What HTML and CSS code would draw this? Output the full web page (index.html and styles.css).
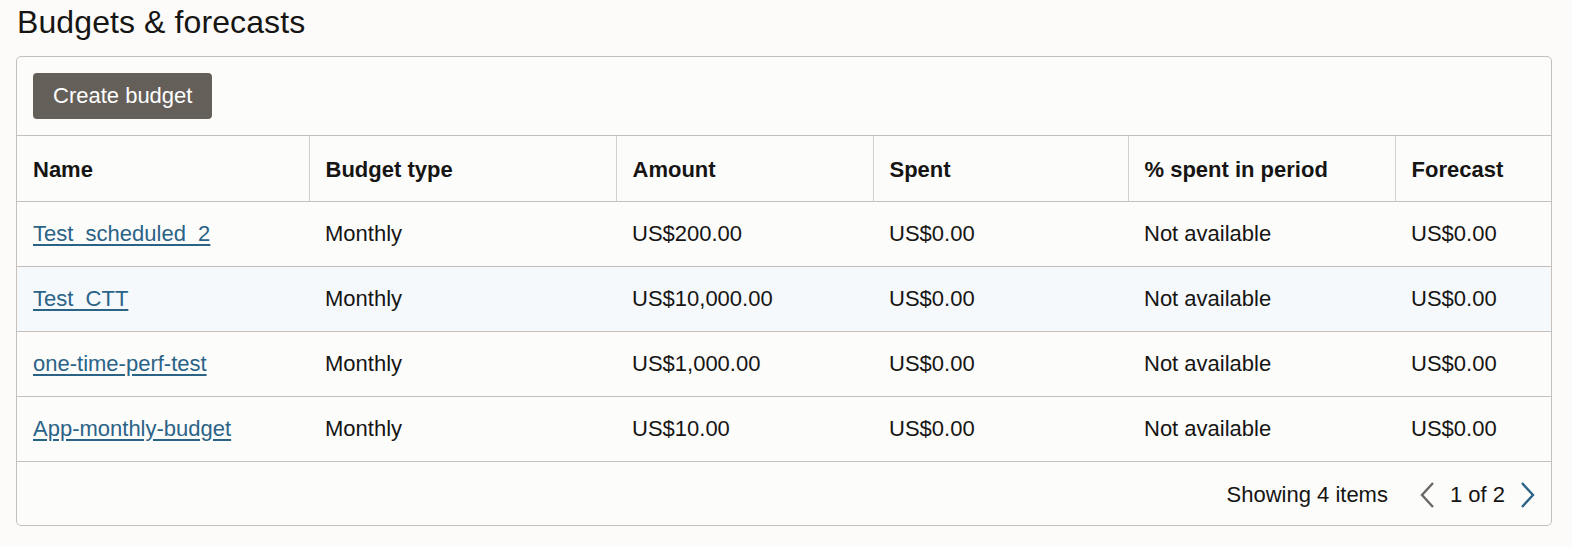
FILE: index.html
```html
<!DOCTYPE html>
<html lang="en">
<head>
  <meta charset="UTF-8">
  <meta name="viewport" content="width=device-width, initial-scale=1.0">
  <title>Budgets &amp; forecasts</title>
  <link rel="stylesheet" href="styles.css">
</head>
<body>
  <h1 class="page-title">Budgets &amp; forecasts</h1>

  <div class="panel">
    <div class="toolbar">
      <button class="btn">Create budget</button>
    </div>

    <table class="budgets">
      <colgroup>
        <col class="c-name">
        <col class="c-type">
        <col class="c-amount">
        <col class="c-spent">
        <col class="c-pct">
        <col class="c-forecast">
      </colgroup>
      <thead>
        <tr>
          <th>Name</th>
          <th>Budget type</th>
          <th>Amount</th>
          <th>Spent</th>
          <th>% spent in period</th>
          <th>Forecast</th>
        </tr>
      </thead>
      <tbody>
        <tr>
          <td><a href="#">Test_scheduled_2</a></td>
          <td>Monthly</td>
          <td>US$200.00</td>
          <td>US$0.00</td>
          <td>Not available</td>
          <td>US$0.00</td>
        </tr>
        <tr class="hover">
          <td><a href="#">Test_CTT</a></td>
          <td>Monthly</td>
          <td>US$10,000.00</td>
          <td>US$0.00</td>
          <td>Not available</td>
          <td>US$0.00</td>
        </tr>
        <tr>
          <td><a href="#">one-time-perf-test</a></td>
          <td>Monthly</td>
          <td>US$1,000.00</td>
          <td>US$0.00</td>
          <td>Not available</td>
          <td>US$0.00</td>
        </tr>
        <tr>
          <td><a href="#">App-monthly-budget</a></td>
          <td>Monthly</td>
          <td>US$10.00</td>
          <td>US$0.00</td>
          <td>Not available</td>
          <td>US$0.00</td>
        </tr>
      </tbody>
    </table>

    <div class="pager">
      <span class="pager-count">Showing 4 items</span>
      <span class="pager-nav">
        <svg class="chev chev-off" width="18" height="28" viewBox="0 0 18 28"><path d="M15 2 L4 14 L15 26" fill="none" stroke="currentColor" stroke-width="2.4"/></svg>
        <span class="pager-page">1 of 2</span>
        <svg class="chev chev-on" width="18" height="28" viewBox="0 0 18 28"><path d="M3 2 L14 14 L3 26" fill="none" stroke="currentColor" stroke-width="2.4"/></svg>
      </span>
    </div>
  </div>
</body>
</html>
```

FILE: styles.css
```css
* {
  margin: 0;
  padding: 0;
  box-sizing: border-box;
  font-family: 'Liberation Sans', Arial, sans-serif;
}

body {
  background: #fcfbfa;
  color: #161513;
  padding: 0 20px 0 16px;
}

.page-title {
  font-size: 32px;
  font-weight: normal;
  line-height: 44px;
  padding-left: 1px;
  letter-spacing: 0.1px;
}

.panel {
  margin-top: 12px;
  border: 1px solid #c5c0bc;
  border-radius: 5px;
  background: #fcfcfb;
}

.toolbar {
  padding: 16px;
  border-bottom: 1px solid #c5c0bc;
}

.btn {
  background: #655f5a;
  color: #fff;
  border: none;
  border-radius: 4px;
  height: 46px;
  padding: 0 20px;
  font-size: 22px;
  cursor: pointer;
}

.budgets {
  width: 100%;
  border-collapse: collapse;
  table-layout: fixed;
  font-size: 22px;
}

.c-name { width: 292px; }
.c-type { width: 307px; }
.c-amount { width: 257px; }
.c-spent { width: 255px; }
.c-pct { width: 267px; }

.budgets th,
.budgets td {
  height: 65px;
  padding: 0 16px;
  text-align: left;
  white-space: nowrap;
  border-bottom: 1px solid #c5c0bc;
}

.budgets th {
  font-weight: bold;
  padding-top: 3px;
  border-left: 1px solid #d4d0cc;
}

.budgets th:first-child {
  border-left: none;
}

.budgets tr.hover td {
  background: #f5f9fc;
}

.budgets a {
  color: #2b6387;
  text-decoration: underline;
  text-underline-offset: 3px;
}

.pager {
  height: 63px;
  display: flex;
  justify-content: flex-end;
  align-items: center;
  padding: 3px 14px 0 0;
  font-size: 22px;
}

.pager-count {
  margin-right: 30px;
}

.pager-nav {
  display: flex;
  align-items: center;
  gap: 14px;
}

.chev {
  display: block;
}

.chev-off {
  color: #6b6661;
}

.chev-on {
  color: #2b6387;
}
```
